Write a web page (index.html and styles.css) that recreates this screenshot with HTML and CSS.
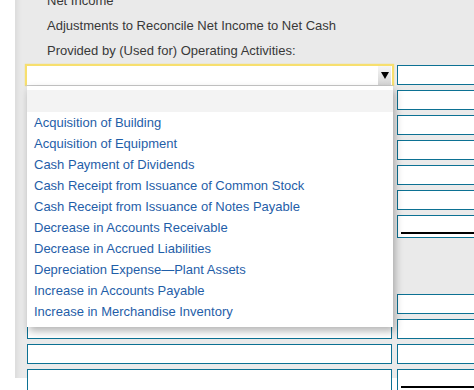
FILE: index.html
```html
<!DOCTYPE html>
<html>
<head>
<meta charset="utf-8">
<link rel="stylesheet" href="styles.css">
</head>
<body>
<div class="panel">
  <div class="labels">
    <div class="label">Net Income</div>
    <div class="label">Adjustments to Reconcile Net Income to Net Cash</div>
    <div class="label">Provided by (Used for) Operating Activities:</div>
  </div>
  <div class="rows">
    <div class="row">
      <div class="left"><div class="select"><span class="arrow"><span class="tri"></span></span></div></div>
      <div class="right"><div class="box"></div></div>
    </div>
    <div class="row"><div class="left"></div><div class="right"><div class="box"></div></div></div>
    <div class="row"><div class="left"></div><div class="right"><div class="box"></div></div></div>
    <div class="row"><div class="left"></div><div class="right"><div class="box"></div></div></div>
    <div class="row"><div class="left"></div><div class="right"><div class="box"></div></div></div>
    <div class="row"><div class="left"></div><div class="right"><div class="box"></div></div></div>
    <div class="row total"><div class="left"></div><div class="right"><div class="box underline"></div></div></div>
    <div class="row spaced"><div class="left"></div><div class="right"><div class="box"></div></div></div>
    <div class="row"><div class="left"><div class="box"></div></div><div class="right"><div class="box"></div></div></div>
    <div class="row"><div class="left"><div class="box"></div></div><div class="right"><div class="box"></div></div></div>
    <div class="row total"><div class="left"><div class="box"></div></div><div class="right"><div class="box underline"></div></div></div>
  </div>
</div>
<ul class="menu">
  <li class="blank"></li>
  <li>Acquisition of Building</li>
  <li>Acquisition of Equipment</li>
  <li>Cash Payment of Dividends</li>
  <li>Cash Receipt from Issuance of Common Stock</li>
  <li>Cash Receipt from Issuance of Notes Payable</li>
  <li>Decrease in Accounts Receivable</li>
  <li>Decrease in Accrued Liabilities</li>
  <li>Depreciation Expense—Plant Assets</li>
  <li>Increase in Accounts Payable</li>
  <li>Increase in Merchandise Inventory</li>
</ul>
</body>
</html>
```
FILE: styles.css
```css
html, body {
  margin: 0;
  padding: 0;
  background: #fff;
  overflow: hidden;
  width: 474px;
  height: 390px;
  font-family: "Liberation Sans", Arial, sans-serif;
}
.panel {
  margin-left: 15px;
  background: #eaeaea;
  height: 390px;
  padding-left: 10px;
  box-shadow: inset 8px 0 6px -6px rgba(0,0,0,0.08);
}
.labels {
  margin-top: -12px;
  padding-left: 22px;
  font-size: 13px;
  line-height: 25px;
  color: #383838;
}
.rows {
  display: flex;
  flex-direction: column;
  gap: 5px;
  margin-top: 2px;
}
.row {
  display: flex;
  height: 20px;
}
.row.total {
  height: 23px;
}
.row.spaced {
  margin-top: 51px;
}
.left {
  width: 365px;
  padding: 0 2px;
  flex: none;
  position: relative;
}
.right {
  margin-left: 3px;
  flex: 1;
}
.box {
  box-sizing: border-box;
  height: 100%;
  border: 1px solid #0c7193;
  background: #fff;
  position: relative;
}
.right .box {
  width: 90px;
}
.box.underline::after {
  content: "";
  position: absolute;
  left: 3px;
  right: 0;
  bottom: 3px;
  height: 2px;
  background: #000;
}
.select {
  position: absolute;
  left: 0;
  top: -1px;
  width: 369px;
  height: 22px;
  box-sizing: border-box;
  border: 2px solid #f7df6e;
  border-bottom: 1px solid #c8c8c8;
  background: #fff;
  box-shadow: 0 0 1px #f3d860;
}
.arrow {
  position: absolute;
  right: 1px;
  top: 0;
  width: 13px;
  height: 19px;
  background: linear-gradient(#f6f6f6, #d4d4d4);
  display: flex;
  align-items: center;
  justify-content: center;
}
.tri {
  width: 0;
  height: 0;
  border-left: 4px solid transparent;
  border-right: 4px solid transparent;
  border-top: 7px solid #000;
}
.menu {
  position: absolute;
  left: 27px;
  top: 86px;
  width: 366px;
  margin: 0;
  padding: 4px 0 5px;
  list-style: none;
  background: #fff;
  box-shadow: 2px 4px 8px rgba(0,0,0,0.3);
}
.menu li {
  height: 21px;
  line-height: 21px;
  padding-left: 7px;
  font-size: 13px;
  color: #1f5ea8;
  white-space: nowrap;
}
.menu li.blank {
  height: 22px;
  background: #f3f3f3;
}
```
